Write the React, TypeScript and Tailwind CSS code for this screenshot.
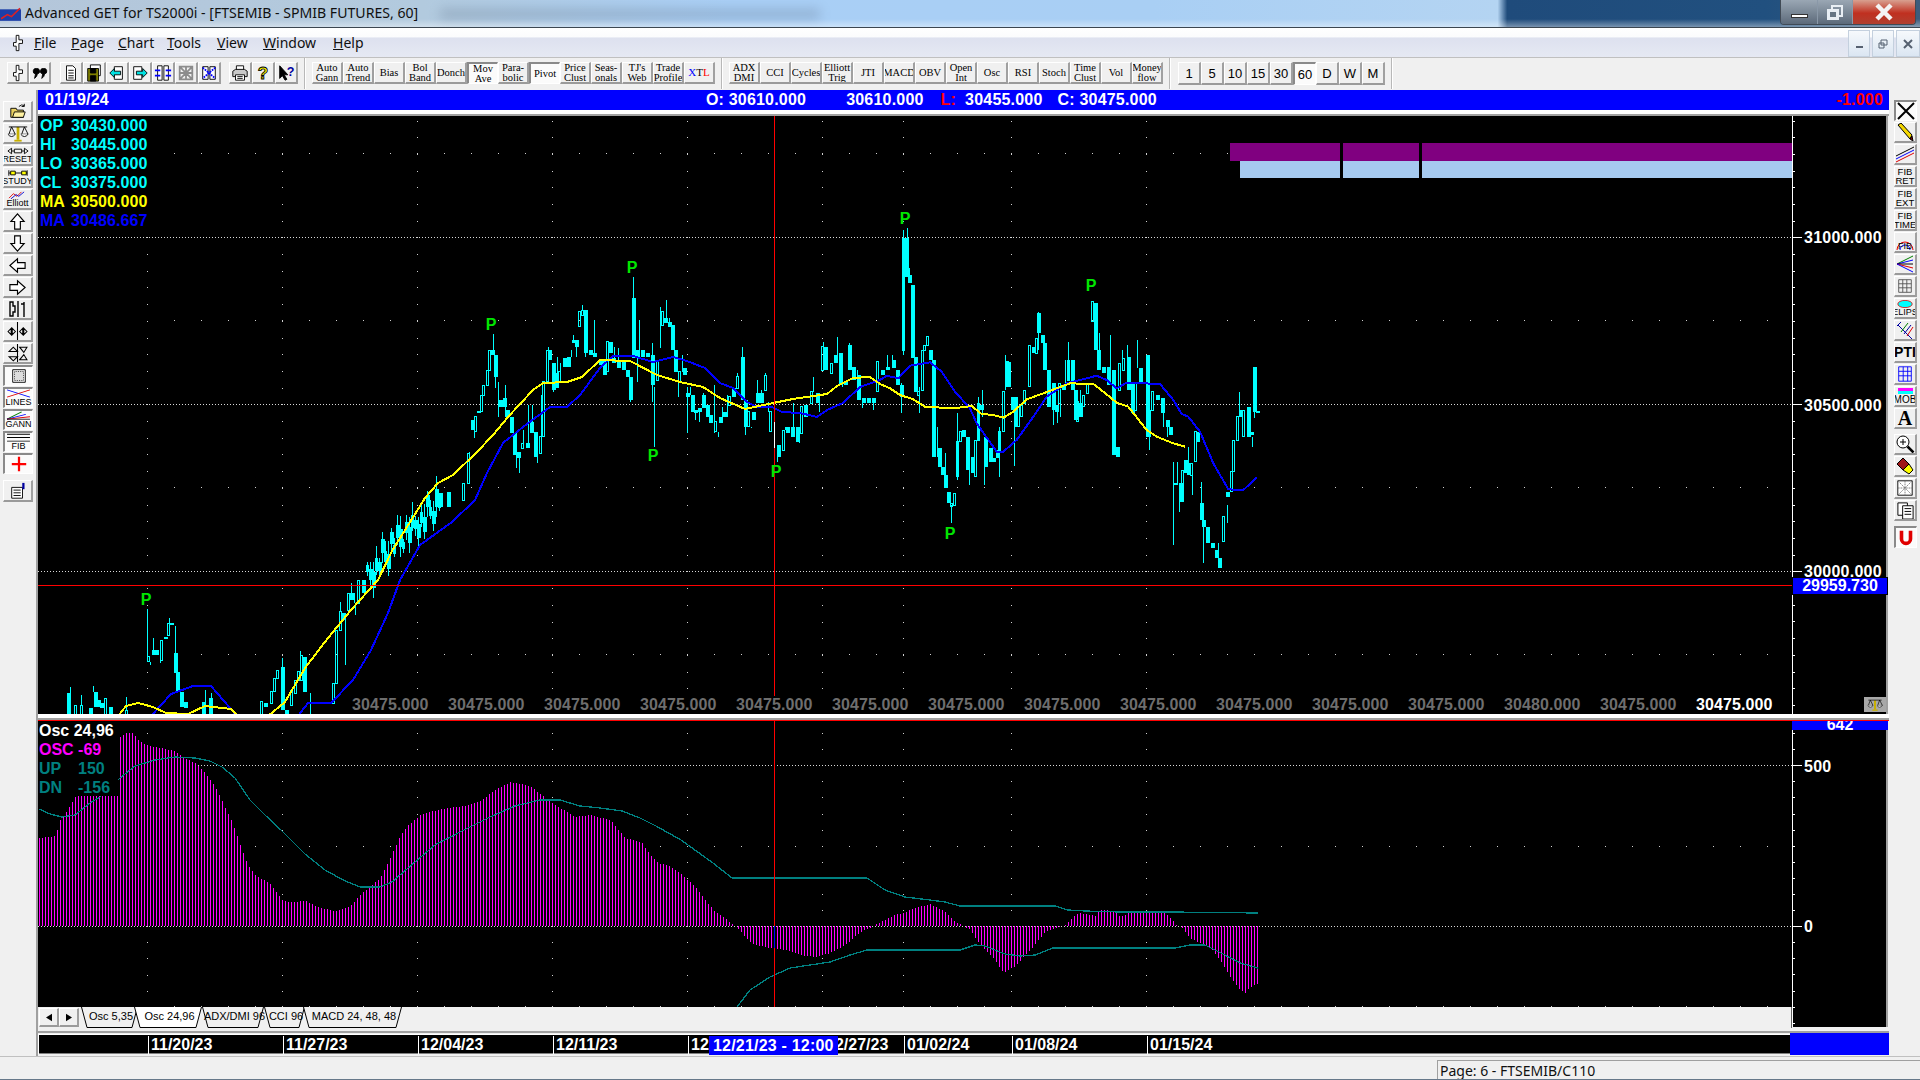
import type { ReactNode } from "react";

const sans = "font-['Liberation_Sans',Arial,sans-serif]";
const ui = "font-['Noto_Sans',sans-serif]";
const serif = "font-['Liberation_Serif',serif]";

type Pt = [number, number];
type Bar = [number, number, number, number?];
type Wick = [number, number, number];

const at = (pts: Pt[], x: number) => {
  if (x <= pts[0][0]) return pts[0][1];
  for (let i = 1; i < pts.length; i++) {
    if (x <= pts[i][0]) {
      const [x0, y0] = pts[i - 1];
      const [x1, y1] = pts[i];
      return y0 + ((y1 - y0) * (x - x0)) / (x1 - x0);
    }
  }
  return pts[pts.length - 1][1];
};

const line = (pts: Pt[]) => pts.map((p) => p.join(",")).join(" ");

// candles read off the picture at 3x: [x, body top, body bottom, hollow]
const barsLeft: Bar[] = [
  [90, 340, 420], [110, 375, 420, 1], [128, 375, 420, 1], [155, 385, 420], [170, 335, 380], [180, 360, 380], [190, 370, 385], [200, 355, 420, 1], [215, 380, 420],
  [265, 390, 420, 1], [330, 230, 245, 1], [345, 210, 225], [355, 210, 225], [370, 180, 240, 1], [380, 170, 178], [390, 130, 165, 1], [400, 130, 135], [410, 220, 280],
  [418, 275, 335], [428, 335, 380], [440, 365, 385], [495, 365, 420], [515, 355, 420], [670, 365, 420, 1], [680, 370, 380], [700, 335, 370, 1], [708, 295, 335, 1],
  [718, 270, 295, 1], [733, 260, 390], [745, 390, 420], [760, 330, 375, 1], [770, 300, 340, 1], [780, 275, 300, 1], [790, 225, 300, 1], [797, 230, 335], [885, 310, 370, 1],
  [895, 150, 310, 1], [905, 95, 150, 1], [915, 100, 120], [930, 40, 90, 1], [940, 40, 60], [960, 0, 70, 1], [975, 0, 40],
];
const wicksLeft: Wick[] = [
  [328, 88, 230], [410, 138, 220], [920, 120, 255], [815, 340, 420], [95, 320, 340], [130, 345, 375], [165, 318, 335], [265, 350, 390], [345, 175, 210], [392, 115, 130],
  [335, 245, 255], [365, 240, 248], [500, 330, 365], [518, 340, 355], [733, 235, 260], [787, 212, 225], [905, 65, 95], [950, 70, 105], [947, 40, 70], [940, 10, 40],
];
const barsMid: Bar[] = [
  [180, 880, 920], [205, 875, 920], [250, 850, 900, 1], [265, 760, 850, 1], [275, 660, 690], [285, 650, 695, 1], [295, 632, 640], [303, 585, 635, 1], [310, 555, 585, 1],
  [320, 510, 555, 1], [328, 450, 510, 1], [337, 450, 465], [346, 465, 530], [360, 600, 620], [372, 595, 620], [382, 630, 650], [392, 650, 700], [402, 700, 765], [414, 755, 775],
  [427, 730, 745, 1], [440, 730, 745], [452, 665, 700], [465, 695, 770], [480, 710, 760, 1], [490, 545, 710, 1], [500, 450, 545, 1], [508, 450, 480], [518, 490, 570],
  [528, 520, 565], [538, 515, 545, 1], [552, 475, 500], [565, 470, 500], [578, 420, 430], [588, 420, 440], [598, 335, 380, 1], [606, 330, 345, 1], [615, 330, 460],
  [630, 450, 465], [643, 460, 470], [660, 480, 495], [672, 480, 525], [682, 425, 515, 1], [690, 425, 460], [700, 475, 490], [715, 480, 505], [728, 480, 510], [740, 510, 530],
  [750, 530, 600], [760, 295, 475], [772, 450, 470], [785, 450, 470], [800, 460, 470], [815, 465, 555], [830, 485, 540, 1], [845, 335, 375, 1], [855, 355, 370], [868, 365, 380],
  [877, 375, 450], [886, 450, 515], [897, 515, 545, 1], [912, 505, 525], [922, 580, 590], [935, 585, 635], [945, 630, 640], [958, 625, 635], [970, 585, 625], [982, 615, 650],
  [990, 645, 670], [1005, 665, 695, 1], [1020, 650, 670], [1033, 635, 650], [1047, 590, 615, 1], [1058, 565, 590], [1072, 530, 565, 1], [1085, 470, 600], [1095, 600, 680],
  [1105, 635, 680, 1], [1118, 635, 660], [1130, 580, 610], [1142, 580, 610], [1155, 525, 570, 1], [1170, 635, 695, 1], [1193, 735, 770], [1210, 690, 750, 1],
  [1222, 680, 700], [1235, 680, 710], [1250, 680, 725], [1262, 620, 700, 1], [1275, 615, 650], [1292, 575, 610, 1], [1310, 580, 610], [1325, 440, 510, 1], [1335, 440, 510],
  [1352, 490, 520, 1], [1365, 465, 490], [1380, 460, 555], [1395, 545, 555], [1408, 435, 510], [1420, 500, 540], [1435, 525, 600], [1448, 595, 610], [1465, 595, 610],
  [1480, 595, 610], [1490, 485, 575, 1],
];
const wicksMid: Wick[] = [
  [338, 403, 450], [760, 232, 295], [823, 560, 740], [858, 300, 370], [770, 470, 545], [778, 360, 450], [643, 360, 460], [1085, 442, 470], [283, 695, 715], [266, 755, 765],
  [345, 530, 565], [355, 545, 650], [374, 555, 650], [408, 765, 805], [418, 775, 820], [428, 690, 730], [443, 615, 730], [455, 615, 665], [472, 770, 790], [482, 585, 710],
  [503, 440, 450], [520, 570, 575], [530, 470, 520], [540, 490, 515], [572, 450, 470], [580, 405, 420], [588, 440, 470], [606, 315, 330], [615, 460, 470], [703, 440, 475],
  [715, 445, 480], [750, 600, 605], [815, 428, 465], [815, 555, 605], [840, 320, 445], [868, 355, 365], [905, 465, 515], [895, 545, 590], [922, 560, 700], [930, 560, 585],
  [945, 640, 660], [958, 635, 665], [970, 580, 585], [1002, 555, 700], [1013, 695, 710], [1025, 620, 650], [1040, 585, 650], [1072, 520, 530], [1094, 680, 705], [1112, 680, 685],
  [1130, 540, 580], [1142, 570, 580], [1155, 520, 525], [1165, 605, 635], [1190, 770, 785], [1216, 680, 690], [1240, 610, 680], [1258, 725, 730], [1300, 530, 575], [1316, 610, 635],
  [1328, 425, 440], [1372, 410, 465], [1385, 555, 560], [1408, 430, 435], [1432, 510, 530], [1445, 600, 625], [1480, 610, 630],
];
const barsRight: Bar[] = [
  [5, 480, 495], [20, 470, 480], [40, 450, 475], [52, 480, 525], [62, 525, 560], [70, 85, 420, 1], [78, 85, 200], [88, 195, 220], [97, 225, 445], [105, 440, 545], [115, 545, 555, 1],
  [125, 420, 540, 1], [132, 405, 420, 1], [142, 380, 405, 1], [150, 420, 450], [160, 450, 740], [178, 715, 770], [185, 770, 795], [195, 795, 835], [205, 845, 880], [213, 880, 890, 1], [222, 850, 885, 1],
  [232, 695, 800, 1], [240, 665, 695, 1], [250, 660, 680], [260, 680, 780], [275, 740, 790], [285, 690, 800, 1], [295, 580, 690, 1], [303, 585, 600], [315, 685, 770], [330, 715, 755],
  [340, 745, 755], [350, 720, 745], [358, 665, 720, 1], [368, 545, 665, 1], [380, 455, 530, 1], [385, 455, 530], [395, 560, 600], [405, 560, 650], [415, 590, 650, 1], [422, 585, 620, 1], [432, 540, 580, 1], [448, 405, 530, 1],
  [460, 410, 430], [467, 385, 430, 1], [475, 310, 370], [485, 375, 400], [493, 400, 480], [503, 480, 590], [518, 520, 600], [528, 585, 605], [538, 520, 580, 1], [550, 525, 540], [565, 450, 510, 1], [575, 450, 540],
  [585, 540, 630], [592, 575, 635, 1], [600, 580, 620], [610, 555, 590, 1], [620, 520, 550, 1], [637, 275, 335, 1], [645, 280, 420], [655, 420, 480], [670, 470, 490], [685, 470, 525], [700, 480, 735], [710, 710, 740],
  [718, 460, 540, 1], [730, 445, 480, 1], [745, 440, 540], [755, 520, 610], [765, 520, 600, 1], [780, 475, 520], [800, 435, 680], [808, 600, 680, 1], [815, 545, 600, 1], [830, 555, 570], [845, 565, 610],
  [860, 630, 650], [870, 650, 675], [885, 820, 825], [900, 820, 875], [907, 780, 875, 1], [915, 750, 790], [925, 760, 795], [932, 760, 795, 1], [945, 665, 755, 1], [952, 665, 695], [962, 880, 930], [970, 930, 950],
  [980, 950, 1000], [995, 1000, 1015], [1008, 1020, 1045], [1018, 1045, 1075], [1030, 920, 995, 1], [1042, 845, 860], [1052, 785, 845, 1], [1060, 690, 785, 1], [1070, 620, 690, 1], [1080, 600, 620],
  [1090, 600, 680, 1], [1103, 590, 680], [1113, 665, 675], [1123, 470, 605], [1132, 603, 608],
];
const wicksRight: Wick[] = [
  [70, 60, 435], [80, 55, 85], [88, 175, 195], [118, 530, 610], [62, 520, 610], [172, 650, 740], [195, 730, 795], [213, 885, 940], [232, 610, 810], [268, 680, 825], [295, 560, 690], [305, 540, 620],
  [313, 680, 825], [358, 650, 800], [403, 640, 768], [375, 435, 540], [475, 305, 420], [565, 395, 510], [690, 375, 470], [725, 420, 460], [772, 390, 475], [808, 680, 720], [880, 755, 1005],
  [897, 875, 905], [962, 815, 880], [970, 950, 1058], [1040, 885, 940], [1078, 545, 620], [1115, 680, 710], [1123, 605, 625], [935, 795, 855], [925, 710, 760], [890, 755, 820], [658, 370, 420],
  [518, 600, 645], [530, 605, 640], [540, 580, 620], [555, 450, 520], [600, 540, 580], [740, 405, 440], [850, 610, 650], [860, 650, 680], [20, 435, 470], [35, 435, 450], [1015, 1000, 1020],
];

const place = (x0: number, y0: number, rows: Bar[]) =>
  rows.map(([x, top, bottom, hollow]) => ({ x: Math.round(x0 + x / 3), top: y0 + top / 3, bottom: y0 + bottom / 3, hollow: !!hollow }));
const placeWicks = (x0: number, y0: number, rows: Wick[]) =>
  rows.map(([x, a, b]) => ({ x: Math.round(x0 + x / 3), a: y0 + a / 3, b: y0 + b / 3 }));

const joinPath: Pt[] = [[366, 580], [392, 545], [422, 520], [440, 498]];
const joinBars = Array.from({ length: 25 }, (_, i) => {
  const x = 367 + i * 3;
  const jig = ((i * 7) % 5) * 5 - 10;
  const y = at(joinPath, x) + jig;
  return { x, top: y - 3 - (i % 3) * 3, bottom: y + 3 + (i % 4) * 2, hollow: i % 3 === 0 };
});

const candles = [...place(38, 580, barsLeft), ...joinBars, ...place(380, 200, barsMid), ...place(880, 210, barsRight)];
const wicks = [
  ...placeWicks(38, 580, wicksLeft),
  ...placeWicks(380, 200, wicksMid),
  ...placeWicks(880, 210, wicksRight),
  ...joinBars.map((b, i) => ({ x: b.x, a: b.top - 4 - (i % 4) * 3, b: b.bottom + 4 + (i % 3) * 3 })),
];

const zy = (x0: number, y0: number, rows: Pt[]): Pt[] => rows.map(([x, y]) => [x0 + x / 3, y0 + y / 3]);

const maYellow: Pt[] = [
  [268, 716], [285, 702], [305, 668], [328, 638], [351, 610], [378, 580], [392, 551], [425, 498], [438, 483], [453, 475], [477, 452], [493, 435], [508, 417],
  [533, 390], [543, 383], [567, 382], [582, 377], [600, 360], [630, 361], [657, 375], [680, 382], [703, 387], [720, 398],
  [745, 409], [773, 403], [793, 399], [827, 394], [837, 386], [853, 378], [870, 377],
  ...zy(880, 210, [[0, 522], [30, 535], [60, 555], [100, 568], [135, 590], [220, 595], [275, 588], [305, 612], [340, 615], [370, 623], [400, 605], [440, 568], [490, 550], [530, 535], [570, 520], [640, 522], [670, 545], [710, 578], [745, 590], [800, 660], [830, 680], [880, 700], [915, 710]]),
];
const maYellowLow: Pt[] = [[118, 716], [126, 706], [138, 703], [153, 707], [166, 713], [188, 714], [205, 706], [231, 709], [238, 716]];
const maBlue: Pt[] = [
  [298, 716], [308, 703], [331, 703], [353, 680], [371, 650], [388, 613], [400, 580], [420, 545], [452, 522], [475, 500], [487, 473], [503, 443], [523, 427],
  [550, 407], [567, 407], [580, 395], [600, 368], [613, 356], [633, 356], [653, 362], [673, 357], [687, 361], [705, 368],
  [720, 383], [733, 388], [747, 402], [757, 407], [772, 407], [782, 412], [800, 413], [817, 417], [827, 410], [843, 403],
  [860, 387],
  ...zy(880, 210, [[0, 510], [20, 497], [55, 505], [90, 467], [150, 457], [185, 485], [225, 545], [270, 595], [290, 640], [350, 725], [370, 725], [410, 690], [460, 620], [500, 560], [560, 520], [620, 505], [650, 497], [680, 510], [710, 535], [740, 518], [840, 522], [880, 570], [905, 612], [925, 620], [960, 665], [1000, 760], [1045, 838], [1090, 840], [1130, 803]]),
];
const maBlueLow: Pt[] = [[151, 716], [171, 694], [193, 686], [211, 686], [237, 716]];

const oscPath: Pt[] = [
  [39, 838], [55, 836], [60, 820], [70, 806], [75, 797], [117, 770], [120, 737], [125, 733], [132, 733], [140, 742],
  [150, 746], [165, 749], [175, 751], [183, 757], [195, 763], [205, 773], [217, 790], [225, 808], [232, 822], [240, 845],
  [247, 864], [255, 875], [270, 884], [282, 900], [290, 902], [305, 901], [320, 908], [335, 911], [350, 906], [362, 893],
  [372, 885], [380, 878], [390, 858], [400, 836], [408, 825], [420, 815], [440, 809], [465, 806], [480, 801], [495, 790],
  [510, 782], [530, 786], [545, 798], [560, 808], [575, 817], [590, 815], [610, 820], [625, 838], [642, 843], [650, 855],
  [658, 863], [670, 866], [682, 875], [695, 887], [705, 900], [715, 912], [727, 920], [733, 925], [740, 930], [745, 938],
  [755, 945], [770, 948], [785, 950], [800, 955], [815, 957], [830, 953], [845, 945], [860, 932], [870, 928], [880, 922],
  [895, 915], [905, 912], [915, 908], [930, 904], [945, 912], [955, 922], [962, 925], [970, 930], [980, 945], [995, 960],
  [1003, 973], [1015, 966], [1030, 950], [1045, 932], [1060, 927], [1065, 925], [1075, 915], [1080, 913], [1095, 916],
  [1100, 910], [1115, 911], [1120, 917], [1130, 912], [1160, 911], [1168, 915], [1175, 924], [1182, 928], [1190, 938],
  [1200, 943], [1210, 948], [1220, 960], [1230, 977], [1240, 990], [1245, 993], [1250, 987], [1258, 983],
];
const oscUp: Pt[] = [
  [39, 809], [50, 814], [62, 817], [75, 815], [90, 803], [100, 797], [120, 778], [135, 766], [155, 760], [175, 757],
  [195, 758], [210, 761], [222, 767], [235, 778], [250, 800], [265, 815], [282, 831], [305, 854], [325, 870], [345, 881],
  [360, 887], [380, 887], [392, 882], [415, 862], [435, 845], [460, 832], [490, 817], [515, 806], [540, 800], [560, 800],
  [580, 806], [600, 808], [622, 811], [640, 818], [656, 826], [681, 840], [713, 863], [732, 878], [867, 878], [885, 890],
  [905, 897], [930, 900], [945, 902], [960, 906], [1055, 906], [1068, 910], [1085, 911], [1120, 912], [1170, 912], [1258, 913],
];
const oscDn: Pt[] = [
  [737, 1007], [750, 990], [770, 977], [790, 968], [810, 965], [830, 962], [850, 955], [867, 950], [960, 950], [975, 945],
  [985, 946], [1005, 954], [1020, 956], [1035, 955], [1053, 948], [1175, 948], [1190, 945], [1205, 945], [1225, 955],
  [1240, 963], [1258, 968],
];

const oscX = Array.from({ length: 407 }, (_, i) => 39 + i * 3);
const columns = [147, 282, 417, 552, 687, 822, 903, 1011, 1146];

function GridDots({ y0, y1, step, rows, fromX }: { y0: number; y1: number; step: number; rows: number[]; fromX: number }) {
  const dots: ReactNode[] = [];
  columns.forEach((x) => {
    for (let y = y0; y < y1; y += step) dots.push(<rect key={`${x}-${y}`} x={x} y={Math.round(y)} width="1" height="1" fill="#d0d0d0" />);
  });
  rows.forEach((y) => {
    for (let x = fromX; x < 1790; x += 27) dots.push(<rect key={`r${x}-${y}`} x={x} y={y} width="1" height="1" fill="#d0d0d0" />);
  });
  return <>{dots}</>;
}

function Dotted({ y, x1 = 38 }: { y: number; x1?: number }) {
  return <line x1={x1} x2="1792" y1={y + 0.5} y2={y + 0.5} stroke="#d8d8d8" strokeDasharray="1 2" />;
}

function Raised({ className = "", pressed = false, children }: { className?: string; pressed?: boolean; children?: ReactNode }) {
  return (
    <div
      className={`flex shrink-0 items-center justify-center overflow-hidden border ${
        pressed
          ? "border-t-2 border-l-2 border-t-[#8a8a8a] border-l-[#8a8a8a] border-r-white border-b-white bg-[#fbfbfb]"
          : "border-b-2 border-r-2 border-t-white border-l-white border-r-[#a0a0a0] border-b-[#9a9a9a] bg-[#f0f0f0]"
      } ${className}`}
    >
      {children}
    </div>
  );
}

function Ic({ children, size = 18 }: { children: ReactNode; size?: number }) {
  return (
    <svg viewBox="0 0 20 20" width={size} height={size} fill="none" stroke="#000" strokeWidth="1">
      {children}
    </svg>
  );
}

const treeIcon = <Ic><path d="M8 1.500h3v5h4v4h-4v8H8v-5H5v-4h3z" fill="#fff" /></Ic>;
const quoteIcon = <Ic><path d="M6 5a3 3 0 0 1 1 6q0 3-3 5l1-5a3 3 0 0 1 1-6zM14 5a3 3 0 0 1 1 6q0 3-3 5l1-5a3 3 0 0 1 1-6z" fill="#000" /></Ic>;
const docIcon = <Ic><path d="M5 2h7l3 3v13H5zM7 7h6M7 10h6M7 13h6M7 15.500h6" fill="#fff" /></Ic>;
const saveIcon = <Ic><path d="M6 1h11v12H6z" fill="#fff" /><path d="M3 5h12v14H3z" fill="#808000" /><path d="M6 5h6v5H6zM6 13h6v6H6z" fill="#000" /></Ic>;
const docL = <Ic><path d="M7 3h9v14H7z" fill="#fff" /><path d="M2 10l5-5v3h7v4H7v3z" fill="#00e0e0" /></Ic>;
const docR = <Ic><path d="M3 3h9v14H3z" fill="#fff" /><path d="M18 10l-5-5v3H6v4h7v3z" fill="#00e0e0" /></Ic>;
const colsIcon = <Ic><path d="M4 2h5v16H4zM11 2h5v16h-5z" fill="#fff" /><path d="M1 7h6M13 7h6M1 13h6M13 13h6" stroke="#0000ff" strokeWidth="2" /></Ic>;
const hatchIcon = <Ic><path d="M3 3l14 14M17 3L3 17M10 2v16M2 10h16M3 3h14v14H3z" stroke="#8c8c8c" strokeWidth="2" /></Ic>;
const colsXIcon = <Ic><path d="M3 3h6v14H3zM11 3h6v14h-6z" fill="#fff" /><path d="M3 4l14 12M17 4L3 16" stroke="#0000ff" strokeWidth="2" strokeDasharray="2 1" /></Ic>;
const printIcon = <Ic><path d="M6 2h8v5H6z" fill="#fff" /><path d="M2 8l3-2h10l3 2v6H2z" fill="#c8c8c8" /><path d="M5 12h10v6H5zM7 14h6M7 16h6" fill="#fff" /></Ic>;
const helpIcon = <Ic><text x="10" y="17" textAnchor="middle" fontSize="19" fontWeight="700" fontFamily="Liberation Sans" fill="#ffff00" stroke="#000" strokeWidth="1">?</text></Ic>;
const arrowHelp = <Ic><path d="M3 2v14l3-3 3 5 2-1-3-5h4z" fill="#000" /><text x="15" y="13" textAnchor="middle" fontSize="14" fontWeight="700" fontFamily="Liberation Sans" fill="#0000a0" stroke="none">?</text></Ic>;

const folderIcon = <Ic><path d="M2 7h6l1 2h7v8H2z" fill="#e8d060" /><path d="M4 17l2-6h12l-2 6z" fill="#fff2a0" /><path d="M11 5q3-3 6-1M17 2v3h-3" /></Ic>;
const scalesIcon = (size = 22) => (
  <svg viewBox="0 0 24 20" width={size} height={size * 0.85} fill="none" stroke="#000" strokeWidth="1">
    <path d="M12 3v14" stroke="#c8b000" strokeWidth="3" />
    <path d="M8 18h8" stroke="#c8b000" strokeWidth="2" />
    <path d="M2 3h20M5 3l-3 8h7zM19 3l-3 8h7z" />
    <path d="M1 11q4 5 8 0M15 11q4 5 8 0" fill="#fff" />
  </svg>
);
const arrow = (d: string) => <Ic size={19}><path d={d} fill="#fff" strokeWidth="1.200" /></Ic>;
const upIcon = arrow("M10 2l7 8h-4v8H7v-8H3z");
const downIcon = arrow("M10 18l7-8h-4V2H7v8H3z");
const leftIcon = arrow("M2 10l8-7v4h8v6h-8v4z");
const rightIcon = arrow("M18 10l-8-7v4H2v6h8v4z");

const tinyLabel = `${sans} text-[9px] leading-[9px] text-black`;

function Labeled({ icon, label }: { icon: ReactNode; label: string }) {
  return (
    <div className="flex flex-col items-center">
      {icon}
      <span className={tinyLabel}>{label}</span>
    </div>
  );
}

function TwoLine({ a, b }: { a: string; b: string }) {
  return (
    <div className={`${sans} text-center text-[9.500px] leading-[9px] text-black`}>
      {a}
      <br />
      {b}
    </div>
  );
}

const leftTools: ReactNode[] = [
  folderIcon,
  scalesIcon(),
  <Labeled icon={<svg viewBox="0 0 24 8" width="22" height="8" fill="none" stroke="#000"><path d="M1 4l4-3v6zM23 4l-4-3v6zM5 4h3M16 4h3M8 2h8v4H8z" /></svg>} label="RESET" />,
  <Labeled icon={<svg viewBox="0 0 24 8" width="22" height="8" fill="none" stroke="#000"><path d="M2 1v6M22 1v6M2 4h20" /><path d="M4 2h5v4H4zM16 2h5v4h-5z" fill="#ffff00" /></svg>} label="STUDY" />,
  <Labeled icon={<svg viewBox="0 0 24 9" width="22" height="8" fill="none"><path d="M3 8l5-5 4 3 5-5" stroke="#e00000" /><path d="M5 9l6-5 3 2 6-5" stroke="#0000d0" /></svg>} label="Elliott" />,
  upIcon,
  downIcon,
  leftIcon,
  rightIcon,
  <Ic size={20}><path d="M2 3h3v4h2v6H5v4H2zM10 2v16M13 5h3v11M16 3v15" strokeWidth="1.400" /></Ic>,
  <Ic size={21}><path d="M10 1v18M1 10l3-3v6zM8 10l-3-3v6zM12 10l3-3v6zM19 10l-3-3v6z" /></Ic>,
  <Ic size={21}><path d="M10 1v18M2 8l4-4 4 4zM2 13h8l-4 4zM12 4h7l-3 5zm0 12h7l-3-5z" /></Ic>,
  <Ic size={18}><path d="M3 3h14v14H3z" /><path d="M5 5h10v10H5z" stroke="#333" strokeDasharray="1 1" fill="#ddd" /></Ic>,
  <Labeled icon={<svg viewBox="0 0 24 10" width="25" height="9" fill="none" preserveAspectRatio="none"><path d="M1 1l22 8" stroke="#0000ff" /><path d="M1 9l22-8" stroke="#e00000" /></svg>} label="LINES" />,
  <Labeled icon={<svg viewBox="0 0 24 11" width="25" height="9" fill="none" preserveAspectRatio="none"><path d="M1 10l14-9" stroke="#008000" /><path d="M1 10l18-6" stroke="#0000ff" /><path d="M1 10l22-3" stroke="#e00000" /><path d="M1 10h22" stroke="#000" /></svg>} label="GANN" />,
  <Labeled icon={<svg viewBox="0 0 24 11" width="25" height="9" fill="none" stroke="#000" preserveAspectRatio="none"><path d="M1 1.500h22M1 5.500h22M1 10h22" /></svg>} label="FIB" />,
  <svg viewBox="0 0 20 20" width="18" height="18"><path d="M10 2v16M2 10h16" stroke="#ff0000" strokeWidth="2.500" /></svg>,
];

const rightTools: ReactNode[] = [
  <Ic size={20}><path d="M2 2l16 16M18 2L2 18" strokeWidth="2" /></Ic>,
  <Ic size={20}><path d="M3 3l3-2 11 12-2 4z" fill="#f5d800" /><path d="M15 17l3 2-1-5z" fill="#800000" /></Ic>,
  <Ic size={20}><path d="M1 12L19 3" stroke="#000" /><path d="M1 15L19 6" stroke="#0000ff" /><path d="M1 18L19 9" stroke="#e00000" /></Ic>,
  <TwoLine a="FIB" b="RET" />,
  <TwoLine a="FIB" b="EXT" />,
  <TwoLine a="FIB" b="TIME" />,
  <div className="relative flex h-[18px] w-[20px] items-end justify-center">
    <svg viewBox="0 0 20 18" width="20" height="18" fill="none" className="absolute inset-0"><path d="M2 17a8 8 0 0 1 16 0" stroke="#e00000" /><path d="M5 17a5 5 0 0 1 10 0" stroke="#0000ff" /></svg>
    <span className={`${sans} relative text-[9px] leading-[9px] text-black`}>FIB</span>
  </div>,
  <Ic size={20}><path d="M2 10l16-8" stroke="#008000" /><path d="M2 10l16-4" stroke="#0000ff" /><path d="M2 10h16" stroke="#000" /><path d="M2 10l16 4" stroke="#e00000" /><path d="M2 10l16 8" stroke="#0000ff" /></Ic>,
  <Ic size={18}><path d="M3 3h14v14H3zM3 7.500h14M3 12h14M7.500 3v14M12 3v14" stroke="#555" /></Ic>,
  <Labeled icon={<svg viewBox="0 0 20 10" width="18" height="8"><ellipse cx="10" cy="5" rx="9" ry="4.500" fill="#00ffff" stroke="#e00000" /></svg>} label="ELIPS" />,
  <Ic size={20}><path d="M3 5l14 14M6 2l-4 4" stroke="#0000a0" /><path d="M9 14l7-9" stroke="#0000a0" /><path d="M6 12l7-9" stroke="#008000" /><path d="M12 16l6-9" stroke="#e00000" /></Ic>,
  <span className={`${sans} text-[14px] font-bold leading-none text-black`}>PTI</span>,
  <Ic size={18}><path d="M3 2h14v16H3zM3 7h14M3 12h14M8 2v16M13 2v16" stroke="#0000ff" /></Ic>,
  <div className="flex flex-col items-center">
    <div className="h-[3px] w-[15px] bg-[#ff00ff]" />
    <div className="h-[3px] w-[15px] bg-[#00ffff]" />
    <span className={`${sans} mt-[1px] text-[10px] leading-[10px] text-black`}>MOB</span>
  </div>,
  <span className={`${serif} text-[20px] font-bold leading-none text-black`}>A</span>,
];

const rightTools2: ReactNode[] = [
  <Ic size={20}><circle cx="8" cy="8" r="6" fill="#fff" /><path d="M5 8h6M8 5v6" /><path d="M12.500 12.500l6 6" strokeWidth="2.500" /></Ic>,
  <Ic size={20}><path d="M2 8l6-6 6 6-6 6z" fill="#a01818" /><path d="M8 14l6-6 4 6-4 4z" fill="#ffff00" /></Ic>,
  <Ic size={18}><path d="M2 2h16v16H2z" fill="#fff" /><path d="M2 2l16 16M18 2L2 18M10 2v16M2 10h16" stroke="#777" strokeDasharray="2 1" /></Ic>,
  <Ic size={19}><path d="M2 2h10v13H2z" fill="#fff" /><path d="M7 5h11v14H7z" fill="#fff" /><path d="M9 8h7M9 11h7M9 14h7" /></Ic>,
];

const textButtons1: [string, string?, string?][] = [
  ["Auto", "Gann"], ["Auto", "Trend"], ["Bias"], ["Bol", "Band"], ["Donch"], ["Mov", "Ave", "p"], ["Para-", "bolic"], ["Pivot", undefined, "p"],
  ["Price", "Clust"], ["Seas-", "onals"], ["TJ's", "Web"], ["Trade", "Profile"],
];
const textButtons2: [string, string?][] = [
  ["ADX", "DMI"], ["CCI"], ["Cycles"], ["Elliott", "Trig"], ["JTI"], ["MACD"], ["OBV"], ["Open", "Int"], ["Osc"], ["RSI"], ["Stoch"], ["Time", "Clust"], ["Vol"], ["Money", "flow"],
];

function TextButton({ a, b, pressed }: { a: string; b?: string; pressed?: boolean }) {
  return (
    <Raised pressed={pressed} className="h-[22px] w-[31px]">
      <div className={`${serif} text-center text-[10.500px] leading-[9.500px] text-black`}>
        {a}
        {b && <br />}
        {b}
      </div>
    </Raised>
  );
}

function Sep({ className }: { className: string }) {
  return <div className={`h-[31px] w-[2px] shrink-0 border-l border-[#b8b8b8] bg-white ${className}`} />;
}

function TitleBar() {
  return (
    <div className="relative flex h-[28px] shrink-0 items-center border-b border-[#3c4650] bg-[linear-gradient(90deg,#b4c6da_0%,#b2cade_22%,#a9cff6_38%,#a9cff4_60%,#b4d4f2_78%,#1f4b7b_78.500%,#21507f_92%,#3c5c7c_100%)]">
      <div className="absolute inset-x-0 bottom-0 h-[8px] bg-[linear-gradient(180deg,transparent,#ffffff66)]" />
      <div className="absolute left-[440px] top-[9px] h-[10px] w-[380px] bg-[#5a6a80] opacity-30 blur-[6px]" />
      <svg viewBox="0 0 20 14" width="21" height="15" className="relative shrink-0">
        <path d="M0 3h20v11H0z" fill="#1c3fa8" />
        <path d="M1 12l6-4 4 2 8-8" stroke="#e02020" strokeWidth="1.500" fill="none" />
      </svg>
      <span className={`${ui} relative ml-[4px] whitespace-nowrap text-[14.100px] leading-none text-[#101010]`}>
        Advanced GET for TS2000i - [FTSEMIB - SPMIB FUTURES, 60]
      </span>
      <div className="absolute right-[4px] top-0 flex h-[25px] w-[136px] overflow-hidden rounded-b-[4px] border border-t-0 border-[#404a55]">
        <div className="flex h-full w-[37px] items-center justify-center border-r border-[#8a98a8] bg-[linear-gradient(180deg,#9aa7b4,#5c6a7a)]">
          <div className="mt-[8px] h-[4px] w-[17px] border border-[#333] bg-white" />
        </div>
        <div className="flex h-full w-[35px] items-center justify-center border-r border-[#8a98a8] bg-[linear-gradient(180deg,#9aa7b4,#5c6a7a)]">
          <div className="relative h-[15px] w-[16px]">
            <div className="absolute right-0 top-0 h-[12px] w-[12px] border-2 border-[#e8eef4]" />
            <div className="absolute bottom-0 left-0 h-[11px] w-[12px] border-[3px] border-[#e8eef4] bg-[#667584]" />
          </div>
        </div>
        <div className="flex h-full flex-1 items-center justify-center bg-[linear-gradient(180deg,#d8a090,#c03020_55%,#b04030)]">
          <svg viewBox="0 0 20 20" width="22" height="20"><path d="M3 3l14 14M17 3L3 17" stroke="#f4f4f4" strokeWidth="4.500" /></svg>
        </div>
      </div>
    </div>
  );
}

const menus: [string, string, string][] = [
  ["F", "ile", "w-[37px]"],
  ["P", "age", "w-[47px]"],
  ["C", "hart", "w-[49px]"],
  ["T", "ools", "w-[50px]"],
  ["V", "iew", "w-[46px]"],
  ["W", "indow", "w-[70px]"],
  ["H", "elp", ""],
];

function MenuBar() {
  return (
    <div className="relative flex h-[29px] shrink-0 items-center bg-[linear-gradient(180deg,#ffffff_0%,#fbfcfd_30%,#dde1ef_35%,#e6e9f3_100%)] pl-[9px]">
      <div className="w-[25px]">{treeIcon}</div>
      {menus.map(([u, rest, w]) => (
        <span key={u} className={`${ui} text-[14px] leading-none text-[#101010] ${w}`}>
          <span className="underline">{u}</span>
          {rest}
        </span>
      ))}
      <div className="absolute right-0 top-[2px] flex gap-[2px]">
        {[0, 1, 2].map((i) => (
          <div key={i} className={`flex h-[27px] items-center justify-center border border-[#c4d0de] bg-[linear-gradient(180deg,#f6f9fc,#dbe6f2)] ${i === 2 ? "w-[24px]" : "w-[22px]"}`}>
            {i === 0 && <div className="mt-[6px] h-[2px] w-[7px] bg-[#556070]" />}
            {i === 1 && <svg viewBox="0 0 10 10" width="10" height="10" fill="none" stroke="#556070"><path d="M3 1h6v5H3zM1 4h5v5H1z" /></svg>}
            {i === 2 && <svg viewBox="0 0 10 10" width="10" height="10" stroke="#556070" strokeWidth="2"><path d="M1 1l8 8M9 1L1 9" /></svg>}
          </div>
        ))}
      </div>
    </div>
  );
}

function ToolBar() {
  return (
    <div className="flex h-[33px] shrink-0 items-start border-t border-[#c0c0c0] bg-[#f0f0f0] pl-[7px] pt-[4px]">
      {[treeIcon, quoteIcon].map((ic, i) => <Raised key={i} className="h-[22px] w-[22px]">{ic}</Raised>)}
      <div className="w-[9px]" />
      {[docIcon, saveIcon, docL, docR, colsIcon, hatchIcon, colsXIcon].map((ic, i) => <Raised key={i} className="h-[22px] w-[23px]">{ic}</Raised>)}
      <div className="w-[8px]" />
      {[printIcon, helpIcon, arrowHelp].map((ic, i) => <Raised key={i} className="h-[22px] w-[23px]">{ic}</Raised>)}
      <Sep className="mx-[6px] -mt-[4px]" />
      {textButtons1.map(([a, b, p]) => <TextButton key={a} a={a} b={b} pressed={p === "p"} />)}
      <Raised className="h-[22px] w-[31px]">
        <span className={`${serif} text-[11px] leading-none`}>
          <span className="text-[#0000ff]">X</span>T<span className="text-[#ff0000]">L</span>
        </span>
      </Raised>
      <Sep className="mx-[6px] -mt-[4px]" />
      {textButtons2.map(([a, b]) => <TextButton key={a} a={a} b={b} />)}
      <Sep className="ml-[6px] mr-[7px] -mt-[4px]" />
      {["1", "5", "10", "15", "30", "60", "D", "W", "M"].map((t) => (
        <Raised key={t} pressed={t === "60"} className="h-[23px] w-[23px]">
          <span className={`${sans} text-[13px] leading-none text-black`}>{t}</span>
        </Raised>
      ))}
      <Sep className="ml-[6px] -mt-[4px]" />
    </div>
  );
}

function LeftTools() {
  return (
    <div className="flex h-full w-[38px] shrink-0 flex-col border-r-2 border-[#a0a0a0] pl-[3px] pt-[11px]">
      {leftTools.map((t, i) => (
        <Raised key={i} pressed={i >= 12} className="mb-[1px] h-[21px] w-[30px]">{t}</Raised>
      ))}
      <Raised className="mt-[5px] h-[22px] w-[30px]">
        <Ic size={18}><path d="M3 6h12v12H3z" fill="#fff" /><path d="M5 9h8M5 12h8M5 15h8" /><path d="M16 1v7" stroke="#0000a0" strokeWidth="2.500" /></Ic>
      </Raised>
    </div>
  );
}

function RightTools() {
  return (
    <div className="flex h-full w-[31px] shrink-0 flex-col pl-[5px] pt-[10px]">
      {rightTools.map((t, i) => (
        <Raised key={i} pressed={i === 0} className="mb-[1px] h-[21px] w-[23px]">{t}</Raised>
      ))}
      <div className="h-[4px]" />
      {rightTools2.map((t, i) => (
        <Raised key={i} className="mb-[1px] h-[21px] w-[23px]">{t}</Raised>
      ))}
      <div className="h-[4px]" />
      <Raised pressed className="h-[22px] w-[23px]">
        <svg viewBox="0 0 20 20" width="18" height="18" fill="none"><path d="M5 2v9a5 5 0 0 0 10 0V2" stroke="#e00000" strokeWidth="4" /></svg>
      </Raised>
    </div>
  );
}

function HeaderBar() {
  const t = `${sans} whitespace-nowrap text-[16px] font-bold leading-none tracking-[0.2px]`;
  return (
    <div className="flex h-[20px] shrink-0 items-center bg-[#0000ff] pl-[7px] text-white">
      <span className={t}>01/19/24</span>
      <span className={`${t} ml-[597px]`}>O: 30610.000</span>
      <span className={`${t} ml-[40px]`}>30610.000</span>
      <span className={`${t} ml-[17px] text-[#ff0000]`}>L:</span>
      <span className={`${t} ml-[9px]`}>30455.000</span>
      <span className={`${t} ml-[15px]`}>C: 30475.000</span>
      <span className={`${t} ml-auto mr-[6px] text-[#ff0000]`}>-1.000</span>
    </div>
  );
}

const legend: [string, string, string][] = [
  ["OP", "30430.000", "text-[#00ffff]"],
  ["HI", "30445.000", "text-[#00ffff]"],
  ["LO", "30365.000", "text-[#00ffff]"],
  ["CL", "30375.000", "text-[#00ffff]"],
  ["MA", "30500.000", "text-[#ffff00]"],
  ["MA", "30486.667", "text-[#0000ff]"],
];

const closes = ["30475.000", "30475.000", "30475.000", "30475.000", "30475.000", "30475.000", "30475.000", "30475.000", "30475.000", "30475.000", "30475.000", "30475.000", "30480.000", "30475.000", "30475.000"];

const pivots: Pt[] = [[146, 599], [491, 324], [632, 267], [653, 455], [776, 471], [905, 218], [950, 533], [1091, 285]];

function MainChart() {
  return (
    <div className="relative h-[598px] w-[1754px] shrink-0 overflow-hidden bg-black">
      <svg viewBox="38 116 1754 598" className="absolute inset-0 h-full w-full" shapeRendering="crispEdges">
        <GridDots y0={120.500} y1={712} step={16.700} rows={[153, 320, 487, 654]} fromX={174} />
        <Dotted y={237} />
        <Dotted y={404} />
        <Dotted y={571} />
        <rect x="1230" y="143" width="562" height="18" fill="#800080" />
        <rect x="1240" y="161" width="552" height="17" fill="#a6caf0" />
        <rect x="1340" y="143" width="3" height="35" fill="#000" />
        <rect x="1419" y="143" width="3" height="35" fill="#000" />
        {wicks.map((w, i) => <rect key={i} x={w.x} y={w.a} width="1" height={w.b - w.a} fill="#00ffff" />)}
        {candles.map((c, i) =>
          c.hollow ? (
            <rect key={i} x={c.x - 0.5} y={c.top} width="2" height={c.bottom - c.top} fill="none" stroke="#00ffff" />
          ) : (
            <rect key={i} x={c.x - 1} y={c.top} width="4" height={c.bottom - c.top} fill="#00ffff" />
          ),
        )}
        <g fill="none" strokeWidth="2">
          <polyline points={line(maBlueLow)} stroke="#0000ff" />
          <polyline points={line(maBlue)} stroke="#0000ff" />
          <polyline points={line(maYellowLow)} stroke="#ffff00" />
          <polyline points={line(maYellow)} stroke="#ffff00" />
        </g>
        <rect x="774" y="116" width="1" height="598" fill="#ff0000" />
        <rect x="774" y="422" width="1" height="26" fill="#ffffff" />
        <rect x="38" y="585" width="1754" height="1" fill="#ff0000" />
        {pivots.map(([x, y]) => (
          <text key={x} x={x} y={y + 6} textAnchor="middle" fontSize="16" fontWeight="700" fontFamily="Liberation Sans" fill="#00e600">P</text>
        ))}
      </svg>
      <div className={`${sans} absolute left-[2px] top-0 w-[115px] bg-black text-[16px] font-bold leading-[19px]`}>
        {legend.map(([k, v, c]) => (
          <div key={v} className={`flex ${c}`}>
            <span className="w-[31px]">{k}</span>
            <span className="tracking-[0.1px]">{v}</span>
          </div>
        ))}
      </div>
      <div className={`${sans} absolute bottom-0 left-[314px] flex h-[18px] items-center bg-black text-[16px] font-bold leading-none tracking-[0.1px]`}>
        {closes.map((v, i) => (
          <span key={i} className={`w-[96px] ${i === closes.length - 1 ? "text-white" : "text-[#6e6e6e]"}`}>{v}</span>
        ))}
      </div>
    </div>
  );
}

function Axis({ height, step, start, big, children }: { height: number; step: number; start: number; big: number[]; children?: ReactNode }) {
  const ticks: number[] = [];
  for (let y = start; y < height; y += step) ticks.push(Math.round(y));
  return (
    <div className="relative w-[96px] shrink-0 border-r-2 border-[#a0a0a0] bg-black" style={{ height }}>
      <svg width="96" height={height} className="absolute inset-0" shapeRendering="crispEdges">
        <rect x="0" y="0" width="1" height={height} fill="#fff" />
        {ticks.map((y) => <rect key={y} x="0" y={y} width="3" height="1" fill="#fff" />)}
        {big.map((y) => <rect key={y} x="0" y={y} width="10" height="1" fill="#fff" />)}
      </svg>
      {children}
    </div>
  );
}

function AxisText({ top, text }: { top: number; text: string }) {
  return <span className={`${sans} absolute left-[12px] text-[16px] font-bold leading-none tracking-[0.25px] text-white`} style={{ top }}>{text}</span>;
}

const tabs = [
  { t: "Osc 5,35", w: 57, ml: 2 },
  { t: "Osc 24,96", w: 68, ml: -4, active: true },
  { t: "ADX/DMI 96", w: 62, ml: 0 },
  { t: "CCI 96", w: 41, ml: 0 },
  { t: "MACD 24, 48, 48", w: 99, ml: -2 },
];

function Tabs() {
  return (
    <div className="flex h-[22px] shrink-0 items-start bg-[#f0f0f0]">
      <Raised className="ml-[1px] mt-[1px] h-[19px] w-[20px]">
        <svg viewBox="0 0 8 10" width="6" height="9"><path d="M8 0v10L0 5z" /></svg>
      </Raised>
      <Raised className="mt-[1px] h-[19px] w-[20px]">
        <svg viewBox="0 0 8 10" width="6" height="9"><path d="M0 0v10l8-5z" /></svg>
      </Raised>
      {tabs.map((tab) => (
        <div key={tab.t} className="relative flex h-[21px] shrink-0 items-start justify-center pl-[3px] pt-[2px]" style={{ width: tab.w, marginLeft: tab.ml }}>
          <svg viewBox={`0 0 ${tab.w} 21`} width={tab.w} height="21" className="absolute inset-0">
            <path d={`M0.500 0L6 20.500H${tab.w - 6}L${tab.w - 0.5} 0`} fill={tab.active ? "#fff" : "#f0f0f0"} stroke="#000" />
          </svg>
          <span className={`${sans} relative whitespace-nowrap text-[11px] leading-[14px] text-black`}>{tab.t}</span>
        </div>
      ))}
      <div className="ml-auto h-[21px] border-r border-[#606060]" />
    </div>
  );
}

function LowerChart() {
  return (
    <div className="relative h-[286px] w-full shrink-0 overflow-hidden bg-black">
      <svg viewBox="38 721 1754 286" className="absolute inset-0 h-full w-full" shapeRendering="crispEdges">
        <GridDots y0={733} y1={1006} step={16.100} rows={[846, 1006]} fromX={174} />
        <Dotted y={765} x1={198} />
        <Dotted y={926} />
        {oscX.map((x) => {
          const y = at(oscPath, x);
          return <rect key={x} x={x} y={Math.min(y, 926)} width="1" height={Math.abs(y - 926)} fill={x === 774 ? "#0000ff" : "#ff00ff"} />;
        })}
        <g fill="none" stroke="#008080" strokeWidth="1.300">
          <polyline points={line(oscUp)} />
          <polyline points={line(oscDn)} />
        </g>
        <rect x="774" y="721" width="1" height="286" fill="#ff0000" />
        <rect x="774" y="926" width="1" height="22" fill="#0000ff" />
      </svg>
      <div className={`${sans} absolute left-[1px] top-0 h-[75px] w-[79px] bg-black text-[16px] font-bold leading-[19px]`}>
        <div className="text-white">Osc 24,96</div>
        <div className="text-[#ff00ff]">OSC -69</div>
        <div className="flex text-[#008080]"><span className="w-[39px]">UP</span>150</div>
        <div className="flex text-[#008080]"><span className="w-[39px]">DN</span>-156</div>
      </div>
    </div>
  );
}

function DateStrip() {
  const labels: [string, number][] = [["11/20/23", 109], ["11/27/23", 244], ["12/04/23", 379], ["12/11/23", 514], ["12/18/23", 649], ["12/27/23", 784], ["01/02/24", 865], ["01/08/24", 973], ["01/15/24", 1108]];
  return (
    <div className="flex h-[22px] shrink-0">
      <div className="relative my-[1px] w-[1752px] border-l border-t border-white bg-black shadow-[inset_0_-1px_0_#808080]">
        {labels.map(([t, x]) => (
          <span key={t} className={`${sans} absolute top-[1px] border-l border-white pl-[2px] text-[16px] font-bold leading-[18px] text-white`} style={{ left: x }}>{t}</span>
        ))}
        <span className={`${sans} absolute left-[670px] top-[1px] whitespace-nowrap bg-[#0000ff] pl-[4px] pr-[4px] text-[16px] font-bold leading-[19px] tracking-[0.2px] text-white`}>12/21/23 - 12:00</span>
      </div>
      <div className="flex-1 bg-[#0000ff]" />
    </div>
  );
}

export default function App() {
  return (
    <div className="flex h-[1080px] w-[1920px] flex-col overflow-hidden bg-[#f0f0f0]">
      <TitleBar />
      <MenuBar />
      <ToolBar />
      <div className="flex h-[966px] shrink-0">
        <LeftTools />
        <div className="flex w-[1851px] shrink-0 flex-col">
          <HeaderBar />
          <div className="h-[4px] shrink-0 bg-white" />
          <div className="h-[2px] shrink-0 bg-[#a0a0a0]" />
          <div className="flex shrink-0">
            <MainChart />
            <div className="relative">
              <Axis height={598} step={16.700} start={4.500} big={[121, 288, 455]}>
                <AxisText top={114} text="31000.000" />
                <AxisText top={282} text="30500.000" />
                <AxisText top={448} text="30000.000" />
                <div className={`${sans} absolute left-0 top-[461px] flex h-[18px] w-[96px] items-center justify-center border border-black bg-[#0000ff] text-[16px] font-bold leading-none text-white`}>29959.730</div>
                <div className="absolute bottom-[2px] right-0 flex h-[15px] w-[22px] items-center justify-center bg-[#a8a8a8]">{scalesIcon(16)}</div>
              </Axis>
            </div>
          </div>
          <div className="h-[4px] shrink-0 bg-white" />
          <div className="h-[2px] shrink-0 bg-[#a0a0a0]" />
          <div className="h-[1px] shrink-0 bg-[#ff0000]" />
          <div className="flex h-[306px] shrink-0">
            <div className="flex w-[1754px] shrink-0 flex-col">
              <LowerChart />
              <Tabs />
            </div>
            <div className="relative">
              <Axis height={306} step={16.100} start={12} big={[44, 205]}>
                <div className={`${sans} absolute left-0 top-0 flex h-[9px] w-[96px] items-end justify-center overflow-hidden bg-[#0000ff] text-[16px] font-bold leading-[10px] text-white`}>642</div>
                <AxisText top={38} text="500" />
                <AxisText top={198} text="0" />
              </Axis>
            </div>
          </div>
          <div className="h-[6px] shrink-0 border-b-2 border-[#a0a0a0]" />
          <DateStrip />
        </div>
        <RightTools />
      </div>
      <div className="flex h-[24px] shrink-0 flex-col border-t border-[#c0c0c0]">
        <div className="flex flex-1 justify-end pt-[3px]">
          <div className={`${ui} h-[19px] w-[483px] truncate border-l border-t border-[#a0a0a0] pl-[2px] text-[14px] leading-[19px] text-[#101010]`}>Page: 6 - FTSEMIB/C110</div>
        </div>
        <div className="h-[2px] bg-[#66788a]" />
      </div>
    </div>
  );
}
